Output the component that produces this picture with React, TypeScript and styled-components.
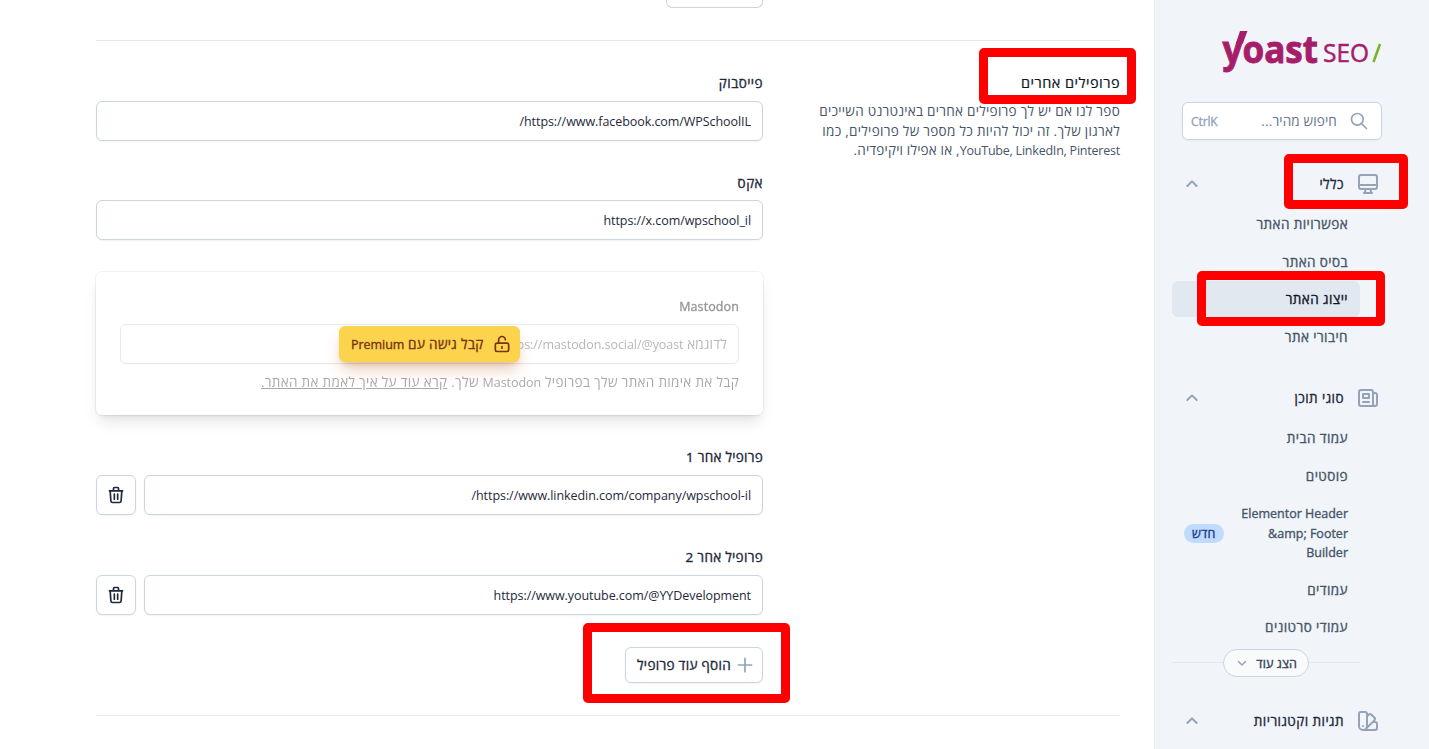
import React from 'react';
import styled, { createGlobalStyle, css } from 'styled-components';

const font = `"Open Sans", "Noto Sans", sans-serif`;

const GlobalStyle = createGlobalStyle`
  *, *::before, *::after { box-sizing: border-box; }
  html, body { margin: 0; height: 100%; overflow: hidden; background: #fff; }
  body { font-family: ${font}; font-size: 13.5px; line-height: 19.5px; color: #1e293b; }
  #root { height: 100%; }
  button, input { font: inherit; letter-spacing: inherit; color: inherit; margin: 0; }
`;

/* medium weight, between the regular and semibold faces */
const medium = css`
  font-weight: 400;
  letter-spacing: 0.44px;
  -webkit-text-stroke: 0.35px currentColor;
`;

const Latin = styled.span<{ $ls?: number }>`
  font-size: 12.5px;
  letter-spacing: ${(p) => p.$ls ?? -0.05}px;
`;

const Page = styled.div`
  direction: rtl;
  position: relative;
  display: flex;
  width: 1429px;
  height: 749px;
  overflow: hidden;
`;

/* ---------- sidebar ---------- */

const Sidebar = styled.aside`
  flex: none;
  width: 275px;
  height: 749px;
  padding: 30px 47px 0 18px;
  background: #f1f5f9;
  border-left: 1px solid #e9edf2;
`;

const LogoRow = styled.div`
  height: 72px;
`;

const Logo = styled.svg`
  display: block;
  overflow: visible;
`;

const SearchButton = styled.button`
  display: flex;
  align-items: center;
  width: 200px;
  height: 38px;
  padding: 0 12px 0 8px;
  background: #fff;
  border: 1px solid #cbd5e1;
  border-radius: 6px;
  box-shadow: 0 1px 2px rgba(0, 0, 0, 0.05);
  color: #64748b;
`;

const SearchLabel = styled.span`
  flex: 1;
  margin-right: 12px;
  padding-top: 1px;
  text-align: right;
  letter-spacing: 0.15px;
`;

const Shortcut = styled.span`
  ${medium}
  direction: ltr;
  padding-top: 1px;
  color: #94a3b8;
  font-size: 12px;
  letter-spacing: -0.1px;
`;

const Group = styled.section<{ $top: number }>`
  margin-top: ${(p) => p.$top}px;
`;

const GroupHeading = styled.button`
  display: flex;
  align-items: center;
  width: 210px;
  height: 24px;
  margin-bottom: 10.25px;
  padding: 0 2px 0 12px;
  border: 0;
  background: none;
`;

const GroupTitle = styled.span`
  ${medium}
  flex: 1;
  margin-right: 12px;
  padding-top: 0.8px;
  text-align: right;
`;

const Items = styled.ul`
  display: flex;
  flex-direction: column;
  gap: 2px;
  width: 188px;
  margin: 0 22px 0 0;
  padding: 0;
  list-style: none;
`;

const Item = styled.li<{ $active?: boolean }>`
  ${medium}
  display: flex;
  align-items: center;
  justify-content: space-between;
  padding: 8.9px 12px 7.1px;
  border-radius: 6px;
  color: #475569;
  letter-spacing: 0.42px;
  ${(p) =>
    p.$active &&
    css`
      background: #e2e8f0;
      color: #0f172a;
    `}
`;

const ItemLabel = styled.span<{ $wide?: boolean }>`
  ${(p) => p.$wide && 'width: 112px; margin: -0.3px 0 0.3px; font-size: 12.5px; letter-spacing: 0;'}
`;

const Badge = styled.span`
  margin-bottom: 1.2px;
  padding: 0 8px;
  border-radius: 10px;
  background: #bfdbfe;
  color: #1e3a8a;
  font-size: 12.5px;
  line-height: 19px;
  letter-spacing: 0.2px;
`;

const MoreRow = styled.div`
  display: flex;
  align-items: center;
  width: 188px;
  margin: 3.9px 22px 0 0;
  &::before,
  &::after {
    content: '';
    flex: 1;
    height: 1px;
    background: #e2e8f0;
  }
`;

const MoreButton = styled.button`
  ${medium}
  display: flex;
  align-items: center;
  justify-content: space-between;
  width: 86px;
  height: 28px;
  padding: 1px 11px 0 12px;
  border: 1px solid #cbd5e1;
  border-radius: 14px;
  background: #f8fafc;
  font-size: 12.5px;
  letter-spacing: 0.1px;
  color: #334155;
`;

/* ---------- main form ---------- */

const Main = styled.main`
  flex: 1;
  padding: 0 34px 0 96px;
`;

const PreviousRow = styled.div`
  display: flex;
  height: 40px;
  padding-right: 357px;
`;

const PreviousButton = styled.div`
  width: 97px;
  height: 8px;
  border: 1px solid #cbd5e1;
  border-top: 0;
  border-radius: 0 0 6px 6px;
`;

const Section = styled.section`
  display: grid;
  grid-template-columns: 309px 667px;
  column-gap: 48px;
  height: 676px;
  border: solid #e5e7eb;
  border-width: 1px 0;
`;

const Legend = styled.div`
  padding-top: 32px;
  white-space: nowrap;
`;

const SectionTitle = styled.h2`
  margin: 0 0 9px;
  font-size: 14.5px;
  line-height: 20px;
  font-weight: 400;
  letter-spacing: 0.47px;
  color: #0f172a;
  -webkit-text-stroke: 0.2px currentColor;
`;

const Description = styled.p`
  margin: 0;
  color: #475569;
`;

const Line = styled.span<{ $ls: number }>`
  display: block;
  height: 19.5px;
  letter-spacing: ${(p) => p.$ls}px;
`;

const Form = styled.div`
  padding-top: 32px;
`;

const Field = styled.div<{ $gap?: number; $faded?: boolean }>`
  margin-bottom: ${(p) => p.$gap ?? 32}px;
  ${(p) => p.$faded && 'opacity: 0.5; filter: grayscale(1);'}
`;

const Label = styled.label<{ $ls?: number }>`
  ${medium}
  display: block;
  height: 19.5px;
  margin-bottom: 8px;
  padding-top: 1px;
  ${(p) => p.$ls !== undefined && `letter-spacing: ${p.$ls}px;`}
`;

const InputRow = styled.div`
  display: flex;
  gap: 8px;
`;

const inputBox = css`
  flex: 1;
  min-width: 0;
  height: 40px;
  padding: 0 11px;
  border: 1px solid #cbd5e1;
  border-radius: 6px;
  background: #fff;
  box-shadow: 0 1px 2px rgba(0, 0, 0, 0.05);
`;

const Input = styled.input`
  ${inputBox}
  padding-top: 1px;
  font-size: 12.5px;
  letter-spacing: -0.06px;
  outline: none;
`;

const EmptyInput = styled.div`
  ${inputBox}
  line-height: 38px;
  color: #64748b;
  letter-spacing: 0.2px;
  white-space: nowrap;
`;

const IconButton = styled.button`
  display: flex;
  align-items: center;
  justify-content: center;
  width: 40px;
  height: 40px;
  padding: 0;
  border: 1px solid #cbd5e1;
  border-radius: 6px;
  background: #fff;
  box-shadow: 0 1px 2px rgba(0, 0, 0, 0.05);
`;

const PremiumCard = styled.div`
  position: relative;
  height: 143px;
  margin: 32px 0;
  padding: 24px 24px 0;
  border-radius: 6px;
  box-shadow: 0 0 0 1px rgba(0, 0, 0, 0.05), 0 10px 15px -3px rgba(0, 0, 0, 0.1),
    0 4px 6px -4px rgba(0, 0, 0, 0.1);
`;

const Hint = styled.p`
  margin: 9.5px 0 0;
  color: #475569;
  letter-spacing: 0.32px;
  white-space: nowrap;
`;

const PremiumButton = styled.button`
  ${medium}
  position: absolute;
  top: 54px;
  left: 243px;
  display: flex;
  align-items: center;
  justify-content: space-between;
  width: 181px;
  height: 36px;
  padding: 0 8px 0 12px;
  border: 0;
  border-radius: 6px;
  background: #fcd34d;
  color: #78350f;
  letter-spacing: 0.35px;
  white-space: nowrap;
  box-shadow: 0 10px 15px -3px rgba(180, 83, 9, 0.3), 0 4px 6px -4px rgba(180, 83, 9, 0.3);
`;

const ButtonText = styled.span`
  padding-top: 1.5px;
`;

const AddButton = styled.button`
  ${medium}
  display: flex;
  align-items: center;
  justify-content: space-between;
  width: 138px;
  height: 36px;
  padding: 0 7px 0 11px;
  border: 1px solid #cbd5e1;
  border-radius: 6px;
  background: #fff;
  box-shadow: 0 1px 2px rgba(0, 0, 0, 0.05);
  letter-spacing: 0.3px;
  white-space: nowrap;
`;

/* red annotation frames laid over the page */
const Frame = styled.div<{ $x: number; $y: number; $w: number; $h: number }>`
  position: absolute;
  left: ${(p) => p.$x}px;
  top: ${(p) => p.$y}px;
  width: ${(p) => p.$w}px;
  height: ${(p) => p.$h}px;
  border: 9px solid #fe0000;
  border-radius: 5px;
  pointer-events: none;
`;

/* ---------- icons ---------- */

const IconSvg = styled.svg`
  flex: none;
  display: block;
  fill: none;
  stroke-linecap: round;
  stroke-linejoin: round;
`;

const paths = {
  desktop:
    'M9.75 17L9 20l-1 1h8l-1-1-.75-3M3 13h18M5 17h14a2 2 0 002-2V5a2 2 0 00-2-2H5a2 2 0 00-2 2v10a2 2 0 002 2z',
  newspaper:
    'M19 20H5a2 2 0 01-2-2V6a2 2 0 012-2h10a2 2 0 012 2v1m2 13a2 2 0 01-2-2V7m2 13a2 2 0 002-2V9a2 2 0 00-2-2h-2m-4-3H9M7 16h6M7 8h6v4H7V8z',
  swatch:
    'M7 21a4 4 0 01-4-4V5a2 2 0 012-2h4a2 2 0 012 2v12a4 4 0 01-4 4zm0 0h12a2 2 0 002-2v-4a2 2 0 00-2-2h-2.343M11 7.343l1.657-1.657a2 2 0 012.828 0l2.829 2.829a2 2 0 010 2.828l-8.486 8.485M7 17h.01',
  search: 'M21 21l-6-6m2-5a7 7 0 11-14 0 7 7 0 0114 0z',
  up: 'M5 15l7-7 7 7',
  down: 'M19 9l-7 7-7-7',
  trash:
    'M19 7l-.867 12.142A2 2 0 0116.138 21H7.862a2 2 0 01-1.995-1.858L5 7m5 4v6m4-6v6m1-10V4a1 1 0 00-1-1h-4a1 1 0 00-1 1v3M4 7h16',
  lockOpen:
    'M8 11V7a4 4 0 118 0m-4 8v2m-6 4h12a2 2 0 002-2v-6a2 2 0 00-2-2H6a2 2 0 00-2 2v6a2 2 0 002 2z',
  plus: 'M12 4v16m8-8H4',
};

type IconProps = { name: keyof typeof paths; size: number; color?: string; width?: number };

const Icon = ({ name, size, color = '#94a3b8', width = 2 }: IconProps) => (
  <IconSvg width={size} height={size} viewBox="0 0 24 24" stroke={color} strokeWidth={width}>
    <path d={paths[name]} />
  </IconSvg>
);

const YoastLogo = () => (
  <Logo width="160" height="44" viewBox="0 0 160 44" direction="ltr">
    <g fill="#a61e69" stroke="#a61e69" strokeWidth="0.5" fontFamily='"Open Sans", sans-serif'>
      <text
        x="0.5"
        y="32.500"
        fontSize="38"
        fontWeight="700"
        textLength="95.500"
        lengthAdjust="spacingAndGlyphs"
        strokeWidth="0.9"
      >
        yoast
      </text>
      <text x="101" y="32" fontSize="25" textLength="46" lengthAdjust="spacingAndGlyphs">
        SEO
      </text>
    </g>
    {/* raised right arm of the wordmark's first letter */}
    <path d="M18 1H25.500L20.800 13.500H13.800z" fill="#a61e69" />
    <path d="M158 14L151.500 32" stroke="#77b227" strokeWidth="2.500" />
  </Logo>
);

type NavItem = { label: React.ReactNode; active?: boolean; badge?: string };

const NavGroup = ({
  icon,
  title,
  items,
  top,
  children,
}: {
  icon: keyof typeof paths;
  title: string;
  items: NavItem[];
  top: number;
  children?: React.ReactNode;
}) => (
  <Group $top={top}>
    <GroupHeading>
      <Icon name={icon} size={24} />
      <GroupTitle>{title}</GroupTitle>
      <Icon name="up" size={16} width={3} />
    </GroupHeading>
    <Items>
      {items.map((item, i) => (
        <Item key={i} $active={item.active}>
          <ItemLabel $wide={!!item.badge}>{item.label}</ItemLabel>
          {item.badge && <Badge>{item.badge}</Badge>}
        </Item>
      ))}
    </Items>
    {children}
  </Group>
);

const general: NavItem[] = [
  { label: 'אפשרויות האתר' },
  { label: 'בסיס האתר' },
  { label: 'ייצוג האתר', active: true },
  { label: 'חיבורי אתר' },
];

const contentTypes: NavItem[] = [
  { label: 'עמוד הבית' },
  { label: 'פוסטים' },
  { label: 'Elementor Header &amp; Footer Builder', badge: 'חדש' },
  { label: 'עמודים' },
  { label: 'עמודי סרטונים' },
];

export default function App() {
  return (
    <Page>
      <GlobalStyle />
      <Sidebar>
        <LogoRow>
          <YoastLogo />
        </LogoRow>
        <SearchButton>
          <Icon name="search" size={20} />
          <SearchLabel>חיפוש מהיר...</SearchLabel>
          <Shortcut>CtrlK</Shortcut>
        </SearchButton>
        <NavGroup icon="desktop" title="כללי" items={general} top={32} />
        <NavGroup icon="newspaper" title="סוגי תוכן" items={contentTypes} top={32.1}>
          <MoreRow>
            <MoreButton>
              הצג עוד
              <Icon name="down" size={12} width={3} />
            </MoreButton>
          </MoreRow>
        </NavGroup>
        <NavGroup icon="swatch" title="תגיות וקטגוריות" items={[]} top={32.3} />
      </Sidebar>

      <Main>
        <PreviousRow>
          <PreviousButton />
        </PreviousRow>
        <Section>
          <Legend>
            <SectionTitle>פרופילים אחרים</SectionTitle>
            <Description>
              <Line $ls={0.27}>ספר לנו אם יש לך פרופילים אחרים באינטרנט השייכים</Line>
              <Line $ls={0.29}>לארגון שלך. זה יכול להיות כל מספר של פרופילים, כמו</Line>
              <Line $ls={0.18}>
                <Latin $ls={-0.22}>YouTube, LinkedIn, Pinterest</Latin>, או אפילו ויקיפדיה.
              </Line>
            </Description>
          </Legend>
          <Form>
            <Field>
              <Label>פייסבוק</Label>
              <InputRow>
                <Input readOnly value="https://www.facebook.com/WPSchoolIL/" />
              </InputRow>
            </Field>
            <Field>
              <Label>אקס</Label>
              <InputRow>
                <Input readOnly value="https://x.com/wpschool_il" />
              </InputRow>
            </Field>
            <PremiumCard>
              <Field $faded>
                <Label>
                  <Latin $ls={0.1}>Mastodon</Latin>
                </Label>
                <InputRow>
                  <EmptyInput>
                    לדוגמא <Latin>https://mastodon.social/@yoast</Latin>
                  </EmptyInput>
                </InputRow>
                <Hint>
                  קבל את אימות האתר שלך בפרופיל <Latin>Mastodon</Latin> שלך.{' '}
                  <u>קרא עוד על איך לאמת את האתר.</u>
                </Hint>
              </Field>
              <PremiumButton>
                <Icon name="lockOpen" size={20} color="#78350f" />
                <ButtonText>
                  קבל גישה עם <Latin>Premium</Latin>
                </ButtonText>
              </PremiumButton>
            </PremiumCard>
            <Field $gap={32.5}>
              <Label $ls={0.25}>פרופיל אחר 1</Label>
              <InputRow>
                <Input readOnly value="https://www.linkedin.com/company/wpschool-il/" />
                <IconButton>
                  <Icon name="trash" size={20} color="#1e293b" />
                </IconButton>
              </InputRow>
            </Field>
            <Field>
              <Label $ls={0.3}>פרופיל אחר 2</Label>
              <InputRow>
                <Input readOnly value="https://www.youtube.com/@YYDevelopment" />
                <IconButton>
                  <Icon name="trash" size={20} color="#1e293b" />
                </IconButton>
              </InputRow>
            </Field>
            <AddButton>
              <Icon name="plus" size={20} />
              <ButtonText>הוסף עוד פרופיל</ButtonText>
            </AddButton>
          </Form>
        </Section>
      </Main>

      <Frame $x={979} $y={48} $w={157} $h={56} />
      <Frame $x={1284} $y={154} $w={124} $h={55} />
      <Frame $x={1197} $y={271} $w={188} $h={55} />
      <Frame $x={583} $y={623} $w={207} $h={80} />
    </Page>
  );
}
